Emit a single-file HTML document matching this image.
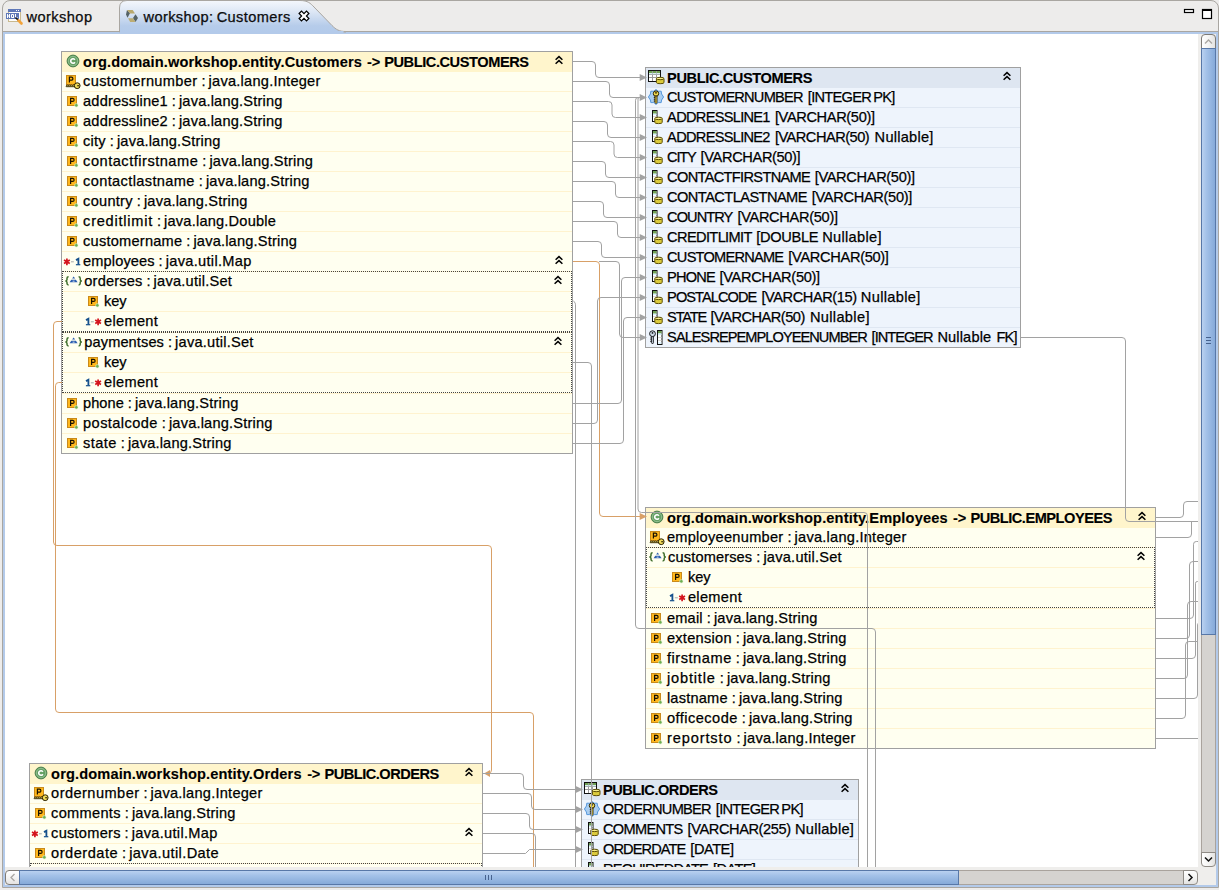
<!DOCTYPE html><html><head><meta charset="utf-8"><title>workshop: Customers</title><style>
html,body{margin:0;padding:0}
body{width:1219px;height:890px;overflow:hidden;background:#edeceb;position:relative;font-family:"Liberation Sans", sans-serif;font-size:14.6px;color:#000}
#ed{position:absolute;left:0;top:0;width:1198px;height:867px;overflow:hidden}
  .white{position:absolute;left:5px;top:34px;width:1193px;height:833px;background:#fff}
.bx{position:absolute;border:1px solid #a0a0a0;box-sizing:content-box}
.r{position:absolute}
.t{position:absolute;white-space:pre;height:20px;line-height:20px;-webkit-text-stroke:0.25px #000;word-spacing:-1.2px}
.b{font-weight:bold;-webkit-text-stroke:0.12px #000}
.i{position:absolute;overflow:visible}
.dot{position:absolute;border:1px dotted #444;box-sizing:content-box}
.ln{position:absolute;left:0;top:0}
.abs{position:absolute}
.tab{color:#111}
</style></head><body><div class="abs" style="left:2px;top:0;width:1217px;height:888px;border:1px solid #a9a6a1;border-radius:8px 8px 0 0;box-sizing:border-box;background:#edeceb"></div>
<svg class="abs" style="left:0;top:0" width="1219" height="34" viewBox="0 0 1219 34">
<defs><linearGradient id="tg" x1="0" y1="0" x2="0" y2="1"><stop offset="0" stop-color="#f4f7fc"/><stop offset="0.35" stop-color="#dde7f5"/><stop offset="0.8" stop-color="#b6ccea"/><stop offset="1" stop-color="#b3caea"/></linearGradient></defs>
<rect x="3" y="32" width="1215" height="2" fill="#b3caea"/>
<path d="M3 31.5H119.5" stroke="#a9a6a1" fill="none"/>
<path d="M344 31.5H1218" stroke="#a9a6a1" fill="none"/>
<path d="M119.500 32V8Q119.500 0.500 127 0.500H300C308 0.500 310.500 3.500 314 7L332 25.500C336 29.500 339 31.500 346 31.500V32Z" fill="url(#tg)" stroke="#a9a6a1"/>
<rect x="120" y="31" width="223.500" height="2" fill="#b3caea"/>
<!-- HQL icon -->
<g>
<rect x="8.500" y="9.500" width="12" height="12" fill="#fdfdfd" stroke="#c9b98f"/>
<rect x="8" y="9" width="13" height="3" fill="#5f78b8"/>
<rect x="16" y="10" width="1" height="1" fill="#fff"/><rect x="18" y="10" width="1" height="1" fill="#fff"/>
<rect x="6" y="13" width="13" height="6" fill="#5f78b8"/>
<path d="M7.500 14v4M7.500 16h2M9.500 14v4M11.500 14.500h2v3h-2zM13 17l1 1M15.500 14v3.500h2" stroke="#fff" fill="none" stroke-width="1"/>
<path d="M15.500 17.500l3.500 3.500" stroke="#111" stroke-width="1.600"/>
<path d="M18.500 20.500l3 3" stroke="#f2a33a" stroke-width="2.600" stroke-linecap="round"/>
</g>
<!-- diagram icon -->
<g>
<path d="M127 10L130 13.200L127.500 17.800L126 14.600Z" fill="#566366"/>
<path d="M127 10H132.700L135 13.500H130Z" fill="#b9a96e"/>
<path d="M135.500 14.300L138 18L135.500 22L133 18Z" fill="#566366"/>
<path d="M128.100 18.200H133L135.500 22H130.200Z" fill="#bdad72"/>
</g>
<!-- close X -->
<path transform="translate(304 16)" d="M-4.900 -2.500L-2.500 -4.900L0 -2.400L2.500 -4.900L4.900 -2.500L2.400 0L4.900 2.500L2.500 4.900L0 2.400L-2.500 4.900L-4.900 2.500L-2.400 0Z" fill="#fff" stroke="#000" stroke-width="1.200"/>
<!-- min/max -->
<rect x="1184.500" y="9.500" width="9" height="3" fill="#fff" stroke="#000" stroke-width="1.200"/>
<rect x="1202.500" y="9.500" width="9" height="9" fill="#fff" stroke="#000" stroke-width="1.200"/>
<rect x="1202" y="9" width="10" height="2" fill="#000"/>
</svg>
<div class="t tab" style="left:26.5px;top:7px;letter-spacing:0.441px">workshop</div>
<div class="t tab" style="left:143.500px;top:7px;letter-spacing:0.378px">workshop: Customers</div>
<div class="abs" style="left:3px;top:34px;width:2px;height:852px;background:#b3caea"></div>
<div class="abs" style="left:1216px;top:34px;width:2px;height:852px;background:#b3caea"></div>
<div class="abs" style="left:3px;top:885px;width:1215px;height:2px;background:#b3caea"></div>
<div class="abs" style="left:5px;top:34px;width:1211px;height:851px;background:#efeeec"></div>
<div id="ed"><div class="white"></div><div class="bx" style="left:61px;top:51px;width:510px;height:401px;background:#fffff0"></div><div class="r" style="left:62px;top:52px;width:510px;height:20px;background:#fff5cc"></div><svg class="i" style="left:64.5px;top:52.5px" width="16" height="16" viewBox="0 0 16 16"><circle cx="8" cy="8" r="5.9" fill="#64a064" stroke="#4a7f4c" stroke-width="1"/><circle cx="8" cy="8" r="4.7" fill="none" stroke="#9cc79a" stroke-width="0.8"/><path d="M9.9 6.7A2.3 2.3 0 1 0 9.9 9.3" fill="none" stroke="#fff" stroke-width="1.6"/></svg><div class="t b" style="left:83.1px;top:51.7px;letter-spacing:0.119px">org.domain.workshop.entity.Customers</div><div class="t b" style="left:367.0px;top:51.7px;letter-spacing:-0.195px">-&gt;</div><div class="t b" style="left:384.2px;top:51.7px;letter-spacing:-0.435px">PUBLIC.CUSTOMERS</div><svg class="i" style="left:554px;top:55.0px" width="10" height="10" viewBox="-5 -5 10 10"><path d="M-3.4 -0.2L0 -3.4L3.4 -0.2M-3.4 3.8L0 0.6L3.4 3.8" fill="none" stroke="#000" stroke-width="1.5"/></svg><div class="r" style="left:62px;top:72px;width:510px;height:20px;background:#fffff0;box-shadow:inset 0 -1px 0 #fff3cf"></div><svg class="i" style="left:66px;top:75px" width="16" height="15" viewBox="0 0 16 15"><rect x="0.5" y="0.5" width="9" height="9" fill="#ffb81c" stroke="#c98a1b"/><path d="M3.4 7.6V2.2H5.4A1.5 1.5 0 0 1 5.4 5.2H3.4" fill="none" stroke="#1a1200" stroke-width="1.2"/><path d="M0.2 11.2l1-1.5 1 1.1 1-1.1 1 1.1 1-1.1 1 1.1 1.2-.9h2v1.8H0.2z" fill="#f2dc5a" stroke="#2a2000" stroke-width="0.9"/><circle cx="11.2" cy="10.7" r="2.9" fill="#f2dc5a" stroke="#2a2000" stroke-width="1"/><rect x="11.2" y="10.2" width="2.2" height="1.1" fill="#2a2000"/></svg><div class="t" style="left:83.1px;top:70.8px;letter-spacing:0.350px">customernumber</div><div class="t" style="left:201.4px;top:70.8px;letter-spacing:-1.062px">:</div><div class="t" style="left:208.6px;top:70.8px;letter-spacing:0.240px">java.lang.Integer</div><div class="r" style="left:62px;top:92px;width:510px;height:20px;background:#fffff0;box-shadow:inset 0 -1px 0 #fff3cf"></div><svg class="i" style="left:67px;top:96px" width="13" height="13" viewBox="0 0 13 13"><rect x="0.5" y="0.5" width="9" height="9" fill="#ffb81c" stroke="#c98a1b"/><path d="M3.6 8V2.4H5.6A1.5 1.5 0 0 1 5.6 5.4H3.6" fill="none" stroke="#1a1200" stroke-width="1.2"/><circle cx="9.3" cy="9.3" r="1.7" fill="#6cae4f" stroke="#dff0d0" stroke-width="0.6"/></svg><div class="t" style="left:83.1px;top:90.8px;letter-spacing:0.161px">addressline1</div><div class="t" style="left:171.7px;top:90.8px;letter-spacing:-1.062px">:</div><div class="t" style="left:178.9px;top:90.8px;letter-spacing:0.193px">java.lang.String</div><div class="r" style="left:62px;top:112px;width:510px;height:20px;background:#fffff0;box-shadow:inset 0 -1px 0 #fff3cf"></div><svg class="i" style="left:67px;top:116px" width="13" height="13" viewBox="0 0 13 13"><rect x="0.5" y="0.5" width="9" height="9" fill="#ffb81c" stroke="#c98a1b"/><path d="M3.6 8V2.4H5.6A1.5 1.5 0 0 1 5.6 5.4H3.6" fill="none" stroke="#1a1200" stroke-width="1.2"/><circle cx="9.3" cy="9.3" r="1.7" fill="#6cae4f" stroke="#dff0d0" stroke-width="0.6"/></svg><div class="t" style="left:83.1px;top:110.8px;letter-spacing:0.161px">addressline2</div><div class="t" style="left:171.7px;top:110.8px;letter-spacing:-1.062px">:</div><div class="t" style="left:178.9px;top:110.8px;letter-spacing:0.193px">java.lang.String</div><div class="r" style="left:62px;top:132px;width:510px;height:20px;background:#fffff0;box-shadow:inset 0 -1px 0 #fff3cf"></div><svg class="i" style="left:67px;top:136px" width="13" height="13" viewBox="0 0 13 13"><rect x="0.5" y="0.5" width="9" height="9" fill="#ffb81c" stroke="#c98a1b"/><path d="M3.6 8V2.4H5.6A1.5 1.5 0 0 1 5.6 5.4H3.6" fill="none" stroke="#1a1200" stroke-width="1.2"/><circle cx="9.3" cy="9.3" r="1.7" fill="#6cae4f" stroke="#dff0d0" stroke-width="0.6"/></svg><div class="t" style="left:83.1px;top:130.8px;letter-spacing:0.202px">city</div><div class="t" style="left:109.7px;top:130.8px;letter-spacing:-1.062px">:</div><div class="t" style="left:116.9px;top:130.8px;letter-spacing:0.193px">java.lang.String</div><div class="r" style="left:62px;top:152px;width:510px;height:20px;background:#fffff0;box-shadow:inset 0 -1px 0 #fff3cf"></div><svg class="i" style="left:67px;top:156px" width="13" height="13" viewBox="0 0 13 13"><rect x="0.5" y="0.5" width="9" height="9" fill="#ffb81c" stroke="#c98a1b"/><path d="M3.6 8V2.4H5.6A1.5 1.5 0 0 1 5.6 5.4H3.6" fill="none" stroke="#1a1200" stroke-width="1.2"/><circle cx="9.3" cy="9.3" r="1.7" fill="#6cae4f" stroke="#dff0d0" stroke-width="0.6"/></svg><div class="t" style="left:83.1px;top:150.8px;letter-spacing:0.508px">contactfirstname</div><div class="t" style="left:202.2px;top:150.8px;letter-spacing:-1.062px">:</div><div class="t" style="left:209.4px;top:150.8px;letter-spacing:0.193px">java.lang.String</div><div class="r" style="left:62px;top:172px;width:510px;height:20px;background:#fffff0;box-shadow:inset 0 -1px 0 #fff3cf"></div><svg class="i" style="left:67px;top:176px" width="13" height="13" viewBox="0 0 13 13"><rect x="0.5" y="0.5" width="9" height="9" fill="#ffb81c" stroke="#c98a1b"/><path d="M3.6 8V2.4H5.6A1.5 1.5 0 0 1 5.6 5.4H3.6" fill="none" stroke="#1a1200" stroke-width="1.2"/><circle cx="9.3" cy="9.3" r="1.7" fill="#6cae4f" stroke="#dff0d0" stroke-width="0.6"/></svg><div class="t" style="left:83.1px;top:170.8px;letter-spacing:0.361px">contactlastname</div><div class="t" style="left:198.7px;top:170.8px;letter-spacing:-1.062px">:</div><div class="t" style="left:205.9px;top:170.8px;letter-spacing:0.193px">java.lang.String</div><div class="r" style="left:62px;top:192px;width:510px;height:20px;background:#fffff0;box-shadow:inset 0 -1px 0 #fff3cf"></div><svg class="i" style="left:67px;top:196px" width="13" height="13" viewBox="0 0 13 13"><rect x="0.5" y="0.5" width="9" height="9" fill="#ffb81c" stroke="#c98a1b"/><path d="M3.6 8V2.4H5.6A1.5 1.5 0 0 1 5.6 5.4H3.6" fill="none" stroke="#1a1200" stroke-width="1.2"/><circle cx="9.3" cy="9.3" r="1.7" fill="#6cae4f" stroke="#dff0d0" stroke-width="0.6"/></svg><div class="t" style="left:83.1px;top:190.8px;letter-spacing:0.263px">country</div><div class="t" style="left:136.7px;top:190.8px;letter-spacing:-1.062px">:</div><div class="t" style="left:143.9px;top:190.8px;letter-spacing:0.193px">java.lang.String</div><div class="r" style="left:62px;top:212px;width:510px;height:20px;background:#fffff0;box-shadow:inset 0 -1px 0 #fff3cf"></div><svg class="i" style="left:67px;top:216px" width="13" height="13" viewBox="0 0 13 13"><rect x="0.5" y="0.5" width="9" height="9" fill="#ffb81c" stroke="#c98a1b"/><path d="M3.6 8V2.4H5.6A1.5 1.5 0 0 1 5.6 5.4H3.6" fill="none" stroke="#1a1200" stroke-width="1.2"/><circle cx="9.3" cy="9.3" r="1.7" fill="#6cae4f" stroke="#dff0d0" stroke-width="0.6"/></svg><div class="t" style="left:83.1px;top:210.8px;letter-spacing:0.752px">creditlimit</div><div class="t" style="left:156.9px;top:210.8px;letter-spacing:-1.062px">:</div><div class="t" style="left:164.1px;top:210.8px;letter-spacing:0.204px">java.lang.Double</div><div class="r" style="left:62px;top:232px;width:510px;height:20px;background:#fffff0;box-shadow:inset 0 -1px 0 #fff3cf"></div><svg class="i" style="left:67px;top:236px" width="13" height="13" viewBox="0 0 13 13"><rect x="0.5" y="0.5" width="9" height="9" fill="#ffb81c" stroke="#c98a1b"/><path d="M3.6 8V2.4H5.6A1.5 1.5 0 0 1 5.6 5.4H3.6" fill="none" stroke="#1a1200" stroke-width="1.2"/><circle cx="9.3" cy="9.3" r="1.7" fill="#6cae4f" stroke="#dff0d0" stroke-width="0.6"/></svg><div class="t" style="left:83.1px;top:230.8px;letter-spacing:0.222px">customername</div><div class="t" style="left:186.2px;top:230.8px;letter-spacing:-1.062px">:</div><div class="t" style="left:193.4px;top:230.8px;letter-spacing:0.193px">java.lang.String</div><div class="r" style="left:62px;top:252px;width:510px;height:20px;background:#fffff0;box-shadow:inset 0 -1px 0 #fff3cf"></div><svg class="i" style="left:63px;top:255.5px" width="18" height="12" viewBox="0 -6 18 12"><path d="M3.9 -3.6V3.2M1 -1.9L6.8 1.5M1 1.5L6.8 -1.9" stroke="#d4141c" stroke-width="1.7" fill="none"/><rect x="8" y="-0.7" width="2.8" height="1" fill="#a8a8a8"/><path d="M13 -1.9L15.4 -3.3V2.6" stroke="#15508c" stroke-width="1.8" fill="none"/><rect x="12.9" y="2.1" width="4.4" height="1.2" fill="#15508c"/></svg><div class="t" style="left:83.1px;top:250.8px;letter-spacing:0.114px">employees</div><div class="t" style="left:158.6px;top:250.8px;letter-spacing:-1.062px">:</div><div class="t" style="left:165.8px;top:250.8px;letter-spacing:0.297px">java.util.Map</div><svg class="i" style="left:554px;top:255.0px" width="10" height="10" viewBox="-5 -5 10 10"><path d="M-3.4 -0.2L0 -3.4L3.4 -0.2M-3.4 3.8L0 0.6L3.4 3.8" fill="none" stroke="#000" stroke-width="1.5"/></svg><div class="r" style="left:62px;top:272px;width:510px;height:20px;background:#fffff0;box-shadow:inset 0 -1px 0 #fff3cf"></div><svg class="i" style="left:65.2px;top:274.5px" width="18" height="12" viewBox="0 -6 18 12"><path d="M3.6 -4.2Q2 -4.2 2 -2.8V-1.4Q2 -0.3 0.5 0Q2 0.3 2 1.4V2.6Q2 4 3.6 4" fill="none" stroke="#3f6e2c" stroke-width="1.5"/><path d="M13.6 -4.2Q15.2 -4.2 15.2 -2.8V-1.4Q15.2 -0.3 16.7 0Q15.2 0.3 15.2 1.4V2.6Q15.2 4 13.6 4" fill="none" stroke="#3f6e2c" stroke-width="1.5"/><path d="M8.6 -4.4L10.1 -2.4H7.1Z" fill="#2a5db0"/><path d="M6.3 -1.3H10.9L12.6 1.2H4.6Z" fill="#2a5db0"/><rect x="7.6" y="-0.3" width="2" height="0.9" fill="#dfe8f5"/></svg><div class="t" style="left:84.3px;top:270.8px;letter-spacing:0.177px">orderses</div><div class="t" style="left:146.4px;top:270.8px;letter-spacing:-1.062px">:</div><div class="t" style="left:153.6px;top:270.8px;letter-spacing:0.234px">java.util.Set</div><svg class="i" style="left:553px;top:275.0px" width="10" height="10" viewBox="-5 -5 10 10"><path d="M-3.4 -0.2L0 -3.4L3.4 -0.2M-3.4 3.8L0 0.6L3.4 3.8" fill="none" stroke="#000" stroke-width="1.5"/></svg><div class="r" style="left:62px;top:292px;width:510px;height:20px;background:#fffff0;box-shadow:inset 0 -1px 0 #fff3cf"></div><svg class="i" style="left:88px;top:296px" width="13" height="13" viewBox="0 0 13 13"><rect x="0.5" y="0.5" width="9" height="9" fill="#ffb81c" stroke="#c98a1b"/><path d="M3.6 8V2.4H5.6A1.5 1.5 0 0 1 5.6 5.4H3.6" fill="none" stroke="#1a1200" stroke-width="1.2"/><circle cx="9.3" cy="9.3" r="1.7" fill="#6cae4f" stroke="#dff0d0" stroke-width="0.6"/></svg><div class="t" style="left:104.1px;top:290.8px;letter-spacing:-0.073px">key</div><div class="r" style="left:62px;top:312px;width:510px;height:20px;background:#fffff0"></div><svg class="i" style="left:85.2px;top:315.5px" width="18" height="12" viewBox="0 -6 18 12"><path d="M1 -1.9L3.4 -3.3V2.6" stroke="#15508c" stroke-width="1.8" fill="none"/><rect x="0.9" y="2.1" width="4.4" height="1.2" fill="#15508c"/><rect x="5.8" y="-0.7" width="3" height="1" fill="#a8a8a8"/><path d="M13.1 -3.6V3.2M10.2 -1.9L16 1.5M10.2 1.5L16 -1.9" stroke="#d4141c" stroke-width="1.7" fill="none"/></svg><div class="t" style="left:104.1px;top:310.8px;letter-spacing:0.297px">element</div><div class="dot" style="left:62px;top:271px;width:508px;height:59px"></div><div class="r" style="left:62px;top:332px;width:510px;height:1px;background:#fff3cf"></div><div class="r" style="left:62px;top:333px;width:510px;height:20px;background:#fffff0;box-shadow:inset 0 -1px 0 #fff3cf"></div><svg class="i" style="left:65.2px;top:335.5px" width="18" height="12" viewBox="0 -6 18 12"><path d="M3.6 -4.2Q2 -4.2 2 -2.8V-1.4Q2 -0.3 0.5 0Q2 0.3 2 1.4V2.6Q2 4 3.6 4" fill="none" stroke="#3f6e2c" stroke-width="1.5"/><path d="M13.6 -4.2Q15.2 -4.2 15.2 -2.8V-1.4Q15.2 -0.3 16.7 0Q15.2 0.3 15.2 1.4V2.6Q15.2 4 13.6 4" fill="none" stroke="#3f6e2c" stroke-width="1.5"/><path d="M8.6 -4.4L10.1 -2.4H7.1Z" fill="#2a5db0"/><path d="M6.3 -1.3H10.9L12.6 1.2H4.6Z" fill="#2a5db0"/><rect x="7.6" y="-0.3" width="2" height="0.9" fill="#dfe8f5"/></svg><div class="t" style="left:84.3px;top:331.8px;letter-spacing:0.101px">paymentses</div><div class="t" style="left:167.9px;top:331.8px;letter-spacing:-1.062px">:</div><div class="t" style="left:175.1px;top:331.8px;letter-spacing:0.234px">java.util.Set</div><svg class="i" style="left:553px;top:336.0px" width="10" height="10" viewBox="-5 -5 10 10"><path d="M-3.4 -0.2L0 -3.4L3.4 -0.2M-3.4 3.8L0 0.6L3.4 3.8" fill="none" stroke="#000" stroke-width="1.5"/></svg><div class="r" style="left:62px;top:353px;width:510px;height:20px;background:#fffff0;box-shadow:inset 0 -1px 0 #fff3cf"></div><svg class="i" style="left:88px;top:357px" width="13" height="13" viewBox="0 0 13 13"><rect x="0.5" y="0.5" width="9" height="9" fill="#ffb81c" stroke="#c98a1b"/><path d="M3.6 8V2.4H5.6A1.5 1.5 0 0 1 5.6 5.4H3.6" fill="none" stroke="#1a1200" stroke-width="1.2"/><circle cx="9.3" cy="9.3" r="1.7" fill="#6cae4f" stroke="#dff0d0" stroke-width="0.6"/></svg><div class="t" style="left:104.1px;top:351.8px;letter-spacing:-0.073px">key</div><div class="r" style="left:62px;top:373px;width:510px;height:20px;background:#fffff0"></div><svg class="i" style="left:85.2px;top:376.5px" width="18" height="12" viewBox="0 -6 18 12"><path d="M1 -1.9L3.4 -3.3V2.6" stroke="#15508c" stroke-width="1.8" fill="none"/><rect x="0.9" y="2.1" width="4.4" height="1.2" fill="#15508c"/><rect x="5.8" y="-0.7" width="3" height="1" fill="#a8a8a8"/><path d="M13.1 -3.6V3.2M10.2 -1.9L16 1.5M10.2 1.5L16 -1.9" stroke="#d4141c" stroke-width="1.7" fill="none"/></svg><div class="t" style="left:104.1px;top:371.8px;letter-spacing:0.297px">element</div><div class="dot" style="left:62px;top:332px;width:508px;height:59px"></div><div class="r" style="left:62px;top:393px;width:510px;height:1px;background:#fff3cf"></div><div class="r" style="left:62px;top:394px;width:510px;height:20px;background:#fffff0;box-shadow:inset 0 -1px 0 #fff3cf"></div><svg class="i" style="left:67px;top:398px" width="13" height="13" viewBox="0 0 13 13"><rect x="0.5" y="0.5" width="9" height="9" fill="#ffb81c" stroke="#c98a1b"/><path d="M3.6 8V2.4H5.6A1.5 1.5 0 0 1 5.6 5.4H3.6" fill="none" stroke="#1a1200" stroke-width="1.2"/><circle cx="9.3" cy="9.3" r="1.7" fill="#6cae4f" stroke="#dff0d0" stroke-width="0.6"/></svg><div class="t" style="left:83.1px;top:392.8px;letter-spacing:0.021px">phone</div><div class="t" style="left:127.7px;top:392.8px;letter-spacing:-1.062px">:</div><div class="t" style="left:134.9px;top:392.8px;letter-spacing:0.193px">java.lang.String</div><div class="r" style="left:62px;top:414px;width:510px;height:20px;background:#fffff0;box-shadow:inset 0 -1px 0 #fff3cf"></div><svg class="i" style="left:67px;top:418px" width="13" height="13" viewBox="0 0 13 13"><rect x="0.5" y="0.5" width="9" height="9" fill="#ffb81c" stroke="#c98a1b"/><path d="M3.6 8V2.4H5.6A1.5 1.5 0 0 1 5.6 5.4H3.6" fill="none" stroke="#1a1200" stroke-width="1.2"/><circle cx="9.3" cy="9.3" r="1.7" fill="#6cae4f" stroke="#dff0d0" stroke-width="0.6"/></svg><div class="t" style="left:83.1px;top:412.8px;letter-spacing:0.411px">postalcode</div><div class="t" style="left:161.7px;top:412.8px;letter-spacing:-1.062px">:</div><div class="t" style="left:168.9px;top:412.8px;letter-spacing:0.193px">java.lang.String</div><div class="r" style="left:62px;top:434px;width:510px;height:20px;background:#fffff0;box-shadow:inset 0 -1px 0 #fff3cf"></div><svg class="i" style="left:67px;top:438px" width="13" height="13" viewBox="0 0 13 13"><rect x="0.5" y="0.5" width="9" height="9" fill="#ffb81c" stroke="#c98a1b"/><path d="M3.6 8V2.4H5.6A1.5 1.5 0 0 1 5.6 5.4H3.6" fill="none" stroke="#1a1200" stroke-width="1.2"/><circle cx="9.3" cy="9.3" r="1.7" fill="#6cae4f" stroke="#dff0d0" stroke-width="0.6"/></svg><div class="t" style="left:83.1px;top:432.8px;letter-spacing:0.412px">state</div><div class="t" style="left:120.7px;top:432.8px;letter-spacing:-1.062px">:</div><div class="t" style="left:127.9px;top:432.8px;letter-spacing:0.193px">java.lang.String</div><div class="abs" style="left:61px;top:453px;width:512px;height:1px;background:#a0a0a0"></div><div class="bx" style="left:645px;top:507px;width:509px;height:240px;background:#fffff0"></div><div class="r" style="left:646px;top:508px;width:509px;height:20px;background:#fff5cc"></div><svg class="i" style="left:648.5px;top:508.5px" width="16" height="16" viewBox="0 0 16 16"><circle cx="8" cy="8" r="5.9" fill="#64a064" stroke="#4a7f4c" stroke-width="1"/><circle cx="8" cy="8" r="4.7" fill="none" stroke="#9cc79a" stroke-width="0.8"/><path d="M9.9 6.7A2.3 2.3 0 1 0 9.9 9.3" fill="none" stroke="#fff" stroke-width="1.6"/></svg><div class="t b" style="left:666.9px;top:507.7px;letter-spacing:0.149px">org.domain.workshop.entity.Employees</div><div class="t b" style="left:953.1px;top:507.7px;letter-spacing:-0.295px">-&gt;</div><div class="t b" style="left:970.4px;top:507.7px;letter-spacing:-0.481px">PUBLIC.EMPLOYEES</div><svg class="i" style="left:1137px;top:511.0px" width="10" height="10" viewBox="-5 -5 10 10"><path d="M-3.4 -0.2L0 -3.4L3.4 -0.2M-3.4 3.8L0 0.6L3.4 3.8" fill="none" stroke="#000" stroke-width="1.5"/></svg><div class="r" style="left:646px;top:528px;width:509px;height:20px;background:#fffff0;box-shadow:inset 0 -1px 0 #fff3cf"></div><svg class="i" style="left:650px;top:531px" width="16" height="15" viewBox="0 0 16 15"><rect x="0.5" y="0.5" width="9" height="9" fill="#ffb81c" stroke="#c98a1b"/><path d="M3.4 7.6V2.2H5.4A1.5 1.5 0 0 1 5.4 5.2H3.4" fill="none" stroke="#1a1200" stroke-width="1.2"/><path d="M0.2 11.2l1-1.5 1 1.1 1-1.1 1 1.1 1-1.1 1 1.1 1.2-.9h2v1.8H0.2z" fill="#f2dc5a" stroke="#2a2000" stroke-width="0.9"/><circle cx="11.2" cy="10.7" r="2.9" fill="#f2dc5a" stroke="#2a2000" stroke-width="1"/><rect x="11.2" y="10.2" width="2.2" height="1.1" fill="#2a2000"/></svg><div class="t" style="left:666.9px;top:526.8px;letter-spacing:0.274px">employeenumber</div><div class="t" style="left:787.4px;top:526.8px;letter-spacing:-1.062px">:</div><div class="t" style="left:794.6px;top:526.8px;letter-spacing:0.240px">java.lang.Integer</div><div class="r" style="left:646px;top:548px;width:509px;height:20px;background:#fffff0;box-shadow:inset 0 -1px 0 #fff3cf"></div><svg class="i" style="left:649.2px;top:550.5px" width="18" height="12" viewBox="0 -6 18 12"><path d="M3.6 -4.2Q2 -4.2 2 -2.8V-1.4Q2 -0.3 0.5 0Q2 0.3 2 1.4V2.6Q2 4 3.6 4" fill="none" stroke="#3f6e2c" stroke-width="1.5"/><path d="M13.6 -4.2Q15.2 -4.2 15.2 -2.8V-1.4Q15.2 -0.3 16.7 0Q15.2 0.3 15.2 1.4V2.6Q15.2 4 13.6 4" fill="none" stroke="#3f6e2c" stroke-width="1.5"/><path d="M8.6 -4.4L10.1 -2.4H7.1Z" fill="#2a5db0"/><path d="M6.3 -1.3H10.9L12.6 1.2H4.6Z" fill="#2a5db0"/><rect x="7.6" y="-0.3" width="2" height="0.9" fill="#dfe8f5"/></svg><div class="t" style="left:668.1px;top:546.8px;letter-spacing:0.133px">customerses</div><div class="t" style="left:756.2px;top:546.8px;letter-spacing:-1.062px">:</div><div class="t" style="left:763.4px;top:546.8px;letter-spacing:0.234px">java.util.Set</div><svg class="i" style="left:1136px;top:551.0px" width="10" height="10" viewBox="-5 -5 10 10"><path d="M-3.4 -0.2L0 -3.4L3.4 -0.2M-3.4 3.8L0 0.6L3.4 3.8" fill="none" stroke="#000" stroke-width="1.5"/></svg><div class="r" style="left:646px;top:568px;width:509px;height:20px;background:#fffff0;box-shadow:inset 0 -1px 0 #fff3cf"></div><svg class="i" style="left:672px;top:572px" width="13" height="13" viewBox="0 0 13 13"><rect x="0.5" y="0.5" width="9" height="9" fill="#ffb81c" stroke="#c98a1b"/><path d="M3.6 8V2.4H5.6A1.5 1.5 0 0 1 5.6 5.4H3.6" fill="none" stroke="#1a1200" stroke-width="1.2"/><circle cx="9.3" cy="9.3" r="1.7" fill="#6cae4f" stroke="#dff0d0" stroke-width="0.6"/></svg><div class="t" style="left:687.9px;top:566.8px;letter-spacing:-0.006px">key</div><div class="r" style="left:646px;top:588px;width:509px;height:20px;background:#fffff0"></div><svg class="i" style="left:669.2px;top:591.5px" width="18" height="12" viewBox="0 -6 18 12"><path d="M1 -1.9L3.4 -3.3V2.6" stroke="#15508c" stroke-width="1.8" fill="none"/><rect x="0.9" y="2.1" width="4.4" height="1.2" fill="#15508c"/><rect x="5.8" y="-0.7" width="3" height="1" fill="#a8a8a8"/><path d="M13.1 -3.6V3.2M10.2 -1.9L16 1.5M10.2 1.5L16 -1.9" stroke="#d4141c" stroke-width="1.7" fill="none"/></svg><div class="t" style="left:687.9px;top:586.8px;letter-spacing:0.325px">element</div><div class="dot" style="left:646px;top:547px;width:507px;height:59px"></div><div class="r" style="left:646px;top:608px;width:509px;height:1px;background:#fff3cf"></div><div class="r" style="left:646px;top:609px;width:509px;height:20px;background:#fffff0;box-shadow:inset 0 -1px 0 #fff3cf"></div><svg class="i" style="left:651px;top:613px" width="13" height="13" viewBox="0 0 13 13"><rect x="0.5" y="0.5" width="9" height="9" fill="#ffb81c" stroke="#c98a1b"/><path d="M3.6 8V2.4H5.6A1.5 1.5 0 0 1 5.6 5.4H3.6" fill="none" stroke="#1a1200" stroke-width="1.2"/><circle cx="9.3" cy="9.3" r="1.7" fill="#6cae4f" stroke="#dff0d0" stroke-width="0.6"/></svg><div class="t" style="left:666.9px;top:607.8px;letter-spacing:0.205px">email</div><div class="t" style="left:706.7px;top:607.8px;letter-spacing:-1.062px">:</div><div class="t" style="left:713.9px;top:607.8px;letter-spacing:0.193px">java.lang.String</div><div class="r" style="left:646px;top:629px;width:509px;height:20px;background:#fffff0;box-shadow:inset 0 -1px 0 #fff3cf"></div><svg class="i" style="left:651px;top:633px" width="13" height="13" viewBox="0 0 13 13"><rect x="0.5" y="0.5" width="9" height="9" fill="#ffb81c" stroke="#c98a1b"/><path d="M3.6 8V2.4H5.6A1.5 1.5 0 0 1 5.6 5.4H3.6" fill="none" stroke="#1a1200" stroke-width="1.2"/><circle cx="9.3" cy="9.3" r="1.7" fill="#6cae4f" stroke="#dff0d0" stroke-width="0.6"/></svg><div class="t" style="left:666.9px;top:627.8px;letter-spacing:0.268px">extension</div><div class="t" style="left:735.7px;top:627.8px;letter-spacing:-1.062px">:</div><div class="t" style="left:742.9px;top:627.8px;letter-spacing:0.193px">java.lang.String</div><div class="r" style="left:646px;top:649px;width:509px;height:20px;background:#fffff0;box-shadow:inset 0 -1px 0 #fff3cf"></div><svg class="i" style="left:651px;top:653px" width="13" height="13" viewBox="0 0 13 13"><rect x="0.5" y="0.5" width="9" height="9" fill="#ffb81c" stroke="#c98a1b"/><path d="M3.6 8V2.4H5.6A1.5 1.5 0 0 1 5.6 5.4H3.6" fill="none" stroke="#1a1200" stroke-width="1.2"/><circle cx="9.3" cy="9.3" r="1.7" fill="#6cae4f" stroke="#dff0d0" stroke-width="0.6"/></svg><div class="t" style="left:666.9px;top:647.8px;letter-spacing:0.543px">firstname</div><div class="t" style="left:735.7px;top:647.8px;letter-spacing:-1.062px">:</div><div class="t" style="left:742.9px;top:647.8px;letter-spacing:0.193px">java.lang.String</div><div class="r" style="left:646px;top:669px;width:509px;height:20px;background:#fffff0;box-shadow:inset 0 -1px 0 #fff3cf"></div><svg class="i" style="left:651px;top:673px" width="13" height="13" viewBox="0 0 13 13"><rect x="0.5" y="0.5" width="9" height="9" fill="#ffb81c" stroke="#c98a1b"/><path d="M3.6 8V2.4H5.6A1.5 1.5 0 0 1 5.6 5.4H3.6" fill="none" stroke="#1a1200" stroke-width="1.2"/><circle cx="9.3" cy="9.3" r="1.7" fill="#6cae4f" stroke="#dff0d0" stroke-width="0.6"/></svg><div class="t" style="left:666.9px;top:667.8px;letter-spacing:0.839px">jobtitle</div><div class="t" style="left:719.7px;top:667.8px;letter-spacing:-1.062px">:</div><div class="t" style="left:726.9px;top:667.8px;letter-spacing:0.193px">java.lang.String</div><div class="r" style="left:646px;top:689px;width:509px;height:20px;background:#fffff0;box-shadow:inset 0 -1px 0 #fff3cf"></div><svg class="i" style="left:651px;top:693px" width="13" height="13" viewBox="0 0 13 13"><rect x="0.5" y="0.5" width="9" height="9" fill="#ffb81c" stroke="#c98a1b"/><path d="M3.6 8V2.4H5.6A1.5 1.5 0 0 1 5.6 5.4H3.6" fill="none" stroke="#1a1200" stroke-width="1.2"/><circle cx="9.3" cy="9.3" r="1.7" fill="#6cae4f" stroke="#dff0d0" stroke-width="0.6"/></svg><div class="t" style="left:666.9px;top:687.8px;letter-spacing:0.210px">lastname</div><div class="t" style="left:731.7px;top:687.8px;letter-spacing:-1.062px">:</div><div class="t" style="left:738.9px;top:687.8px;letter-spacing:0.193px">java.lang.String</div><div class="r" style="left:646px;top:709px;width:509px;height:20px;background:#fffff0;box-shadow:inset 0 -1px 0 #fff3cf"></div><svg class="i" style="left:651px;top:713px" width="13" height="13" viewBox="0 0 13 13"><rect x="0.5" y="0.5" width="9" height="9" fill="#ffb81c" stroke="#c98a1b"/><path d="M3.6 8V2.4H5.6A1.5 1.5 0 0 1 5.6 5.4H3.6" fill="none" stroke="#1a1200" stroke-width="1.2"/><circle cx="9.3" cy="9.3" r="1.7" fill="#6cae4f" stroke="#dff0d0" stroke-width="0.6"/></svg><div class="t" style="left:666.9px;top:707.8px;letter-spacing:0.463px">officecode</div><div class="t" style="left:741.7px;top:707.8px;letter-spacing:-1.062px">:</div><div class="t" style="left:748.9px;top:707.8px;letter-spacing:0.193px">java.lang.String</div><div class="r" style="left:646px;top:729px;width:509px;height:20px;background:#fffff0;box-shadow:inset 0 -1px 0 #fff3cf"></div><svg class="i" style="left:651px;top:733px" width="13" height="13" viewBox="0 0 13 13"><rect x="0.5" y="0.5" width="9" height="9" fill="#ffb81c" stroke="#c98a1b"/><path d="M3.6 8V2.4H5.6A1.5 1.5 0 0 1 5.6 5.4H3.6" fill="none" stroke="#1a1200" stroke-width="1.2"/><circle cx="9.3" cy="9.3" r="1.7" fill="#6cae4f" stroke="#dff0d0" stroke-width="0.6"/></svg><div class="t" style="left:666.9px;top:727.8px;letter-spacing:0.890px">reportsto</div><div class="t" style="left:736.4px;top:727.8px;letter-spacing:-1.062px">:</div><div class="t" style="left:743.6px;top:727.8px;letter-spacing:0.240px">java.lang.Integer</div><div class="abs" style="left:645px;top:748px;width:511px;height:1px;background:#a0a0a0"></div><div class="bx" style="left:29px;top:763px;width:452px;height:160px;background:#fffff0"></div><div class="r" style="left:30px;top:764px;width:452px;height:20px;background:#fff5cc"></div><svg class="i" style="left:32.5px;top:764.5px" width="16" height="16" viewBox="0 0 16 16"><circle cx="8" cy="8" r="5.9" fill="#64a064" stroke="#4a7f4c" stroke-width="1"/><circle cx="8" cy="8" r="4.7" fill="none" stroke="#9cc79a" stroke-width="0.8"/><path d="M9.9 6.7A2.3 2.3 0 1 0 9.9 9.3" fill="none" stroke="#fff" stroke-width="1.6"/></svg><div class="t b" style="left:51.1px;top:763.7px;letter-spacing:0.132px">org.domain.workshop.entity.Orders</div><div class="t b" style="left:307.2px;top:763.7px;letter-spacing:-0.195px">-&gt;</div><div class="t b" style="left:324.4px;top:763.7px;letter-spacing:-0.493px">PUBLIC.ORDERS</div><svg class="i" style="left:464px;top:767.0px" width="10" height="10" viewBox="-5 -5 10 10"><path d="M-3.4 -0.2L0 -3.4L3.4 -0.2M-3.4 3.8L0 0.6L3.4 3.8" fill="none" stroke="#000" stroke-width="1.5"/></svg><div class="r" style="left:30px;top:784px;width:452px;height:20px;background:#fffff0;box-shadow:inset 0 -1px 0 #fff3cf"></div><svg class="i" style="left:34px;top:787px" width="16" height="15" viewBox="0 0 16 15"><rect x="0.5" y="0.5" width="9" height="9" fill="#ffb81c" stroke="#c98a1b"/><path d="M3.4 7.6V2.2H5.4A1.5 1.5 0 0 1 5.4 5.2H3.4" fill="none" stroke="#1a1200" stroke-width="1.2"/><path d="M0.2 11.2l1-1.5 1 1.1 1-1.1 1 1.1 1-1.1 1 1.1 1.2-.9h2v1.8H0.2z" fill="#f2dc5a" stroke="#2a2000" stroke-width="0.9"/><circle cx="11.2" cy="10.7" r="2.9" fill="#f2dc5a" stroke="#2a2000" stroke-width="1"/><rect x="11.2" y="10.2" width="2.2" height="1.1" fill="#2a2000"/></svg><div class="t" style="left:51.1px;top:782.8px;letter-spacing:0.440px">ordernumber</div><div class="t" style="left:143.4px;top:782.8px;letter-spacing:-1.062px">:</div><div class="t" style="left:150.6px;top:782.8px;letter-spacing:0.240px">java.lang.Integer</div><div class="r" style="left:30px;top:804px;width:452px;height:20px;background:#fffff0;box-shadow:inset 0 -1px 0 #fff3cf"></div><svg class="i" style="left:35px;top:808px" width="13" height="13" viewBox="0 0 13 13"><rect x="0.5" y="0.5" width="9" height="9" fill="#ffb81c" stroke="#c98a1b"/><path d="M3.6 8V2.4H5.6A1.5 1.5 0 0 1 5.6 5.4H3.6" fill="none" stroke="#1a1200" stroke-width="1.2"/><circle cx="9.3" cy="9.3" r="1.7" fill="#6cae4f" stroke="#dff0d0" stroke-width="0.6"/></svg><div class="t" style="left:51.1px;top:802.8px;letter-spacing:0.298px">comments</div><div class="t" style="left:124.7px;top:802.8px;letter-spacing:-1.062px">:</div><div class="t" style="left:131.9px;top:802.8px;letter-spacing:0.193px">java.lang.String</div><div class="r" style="left:30px;top:824px;width:452px;height:20px;background:#fffff0;box-shadow:inset 0 -1px 0 #fff3cf"></div><svg class="i" style="left:31px;top:827.5px" width="18" height="12" viewBox="0 -6 18 12"><path d="M3.9 -3.6V3.2M1 -1.9L6.8 1.5M1 1.5L6.8 -1.9" stroke="#d4141c" stroke-width="1.7" fill="none"/><rect x="8" y="-0.7" width="2.8" height="1" fill="#a8a8a8"/><path d="M13 -1.9L15.4 -3.3V2.6" stroke="#15508c" stroke-width="1.8" fill="none"/><rect x="12.9" y="2.1" width="4.4" height="1.2" fill="#15508c"/></svg><div class="t" style="left:51.1px;top:822.8px;letter-spacing:0.254px">customers</div><div class="t" style="left:124.6px;top:822.8px;letter-spacing:-1.062px">:</div><div class="t" style="left:131.8px;top:822.8px;letter-spacing:0.297px">java.util.Map</div><svg class="i" style="left:464px;top:827.0px" width="10" height="10" viewBox="-5 -5 10 10"><path d="M-3.4 -0.2L0 -3.4L3.4 -0.2M-3.4 3.8L0 0.6L3.4 3.8" fill="none" stroke="#000" stroke-width="1.5"/></svg><div class="r" style="left:30px;top:844px;width:452px;height:20px;background:#fffff0;box-shadow:inset 0 -1px 0 #fff3cf"></div><svg class="i" style="left:35px;top:848px" width="13" height="13" viewBox="0 0 13 13"><rect x="0.5" y="0.5" width="9" height="9" fill="#ffb81c" stroke="#c98a1b"/><path d="M3.6 8V2.4H5.6A1.5 1.5 0 0 1 5.6 5.4H3.6" fill="none" stroke="#1a1200" stroke-width="1.2"/><circle cx="9.3" cy="9.3" r="1.7" fill="#6cae4f" stroke="#dff0d0" stroke-width="0.6"/></svg><div class="t" style="left:51.1px;top:842.8px;letter-spacing:0.502px">orderdate</div><div class="t" style="left:122.0px;top:842.8px;letter-spacing:-1.062px">:</div><div class="t" style="left:129.2px;top:842.8px;letter-spacing:0.395px">java.util.Date</div><div class="r" style="left:30px;top:864px;width:452px;height:20px;background:#fffff0;box-shadow:inset 0 -1px 0 #fff3cf"></div><svg class="i" style="left:33.2px;top:866.5px" width="18" height="12" viewBox="0 -6 18 12"><path d="M3.6 -4.2Q2 -4.2 2 -2.8V-1.4Q2 -0.3 0.5 0Q2 0.3 2 1.4V2.6Q2 4 3.6 4" fill="none" stroke="#3f6e2c" stroke-width="1.5"/><path d="M13.6 -4.2Q15.2 -4.2 15.2 -2.8V-1.4Q15.2 -0.3 16.7 0Q15.2 0.3 15.2 1.4V2.6Q15.2 4 13.6 4" fill="none" stroke="#3f6e2c" stroke-width="1.5"/><path d="M8.6 -4.4L10.1 -2.4H7.1Z" fill="#2a5db0"/><path d="M6.3 -1.3H10.9L12.6 1.2H4.6Z" fill="#2a5db0"/><rect x="7.6" y="-0.3" width="2" height="0.9" fill="#dfe8f5"/></svg><div class="t" style="left:52.3px;top:862.8px;letter-spacing:1.145px">orderdetailses</div><div class="t" style="left:163.9px;top:862.8px;letter-spacing:-1.062px">:</div><div class="t" style="left:171.1px;top:862.8px;letter-spacing:0.234px">java.util.Set</div><svg class="i" style="left:463px;top:867.0px" width="10" height="10" viewBox="-5 -5 10 10"><path d="M-3.4 -0.2L0 -3.4L3.4 -0.2M-3.4 3.8L0 0.6L3.4 3.8" fill="none" stroke="#000" stroke-width="1.5"/></svg><div class="r" style="left:30px;top:884px;width:452px;height:20px;background:#fffff0;box-shadow:inset 0 -1px 0 #fff3cf"></div><svg class="i" style="left:56px;top:888px" width="13" height="13" viewBox="0 0 13 13"><rect x="0.5" y="0.5" width="9" height="9" fill="#ffb81c" stroke="#c98a1b"/><path d="M3.6 8V2.4H5.6A1.5 1.5 0 0 1 5.6 5.4H3.6" fill="none" stroke="#1a1200" stroke-width="1.2"/><circle cx="9.3" cy="9.3" r="1.7" fill="#6cae4f" stroke="#dff0d0" stroke-width="0.6"/></svg><div class="t" style="left:72.1px;top:882.8px;letter-spacing:-0.073px">key</div><div class="r" style="left:30px;top:904px;width:452px;height:20px;background:#fffff0"></div><svg class="i" style="left:53.2px;top:907.5px" width="18" height="12" viewBox="0 -6 18 12"><path d="M1 -1.9L3.4 -3.3V2.6" stroke="#15508c" stroke-width="1.8" fill="none"/><rect x="0.9" y="2.1" width="4.4" height="1.2" fill="#15508c"/><rect x="5.8" y="-0.7" width="3" height="1" fill="#a8a8a8"/><path d="M13.1 -3.6V3.2M10.2 -1.9L16 1.5M10.2 1.5L16 -1.9" stroke="#d4141c" stroke-width="1.7" fill="none"/></svg><div class="t" style="left:72.1px;top:902.8px;letter-spacing:0.297px">element</div><div class="dot" style="left:30px;top:863px;width:450px;height:59px"></div><div class="r" style="left:30px;top:924px;width:452px;height:1px;background:#fff3cf"></div><div class="abs" style="left:29px;top:924px;width:454px;height:1px;background:#a0a0a0"></div><div class="bx" style="left:645px;top:67px;width:374px;height:279px;background:#eef4fc"></div><div class="r" style="left:646px;top:68px;width:374px;height:20px;background:#dee6f1"></div><svg class="i" style="left:648px;top:70px" width="17" height="15" viewBox="0 0 17 15"><rect x="0.5" y="0.5" width="12" height="11" fill="#fff" stroke="#111"/><rect x="1" y="1" width="11" height="2.2" fill="#6fa053"/><path d="M4.5 1v10M8.5 1v10M1 4.5h11M1 7.5h11" stroke="#9a9a9a" stroke-width="1" fill="none"/><rect x="1" y="3.3" width="11" height="1" fill="#cfeffc" opacity="0.8"/><path d="M8.4 8.5v4.1a3.8 1.1 0 0 0 7.6 0V8.5Z" fill="#dccb3c" stroke="#5b4d05" stroke-width="1"/><ellipse cx="12.2" cy="8.5" rx="3.8" ry="1.2" fill="#f7ee8a" stroke="#5b4d05" stroke-width="1"/></svg><div class="t b" style="left:667.1px;top:67.7px;letter-spacing:-0.397px">PUBLIC.CUSTOMERS</div><svg class="i" style="left:1002px;top:71.0px" width="10" height="10" viewBox="-5 -5 10 10"><path d="M-3.4 -0.2L0 -3.4L3.4 -0.2M-3.4 3.8L0 0.6L3.4 3.8" fill="none" stroke="#000" stroke-width="1.5"/></svg><div class="r" style="left:646px;top:88px;width:374px;height:20px;background:#eef4fc;box-shadow:inset 0 -1px 0 #dfe7f2"></div><svg class="i" style="left:648px;top:89px" width="16" height="16" viewBox="0 0 16 16"><path d="M8 0.5L10.2 2.2H13.2L13.6 5L15.6 8L13.6 11L13.2 13.6H10.2L8 15.5L5.8 13.6H2.8L2.4 11L0.4 8L2.4 5L2.8 2.2H5.8Z" fill="#a9cdf0" stroke="#4a90d9" stroke-width="0.9"/><circle cx="8" cy="4.6" r="2.7" fill="#f4dc4e" stroke="#2a2000" stroke-width="1"/><circle cx="8" cy="3.8" r="0.9" fill="#2a2000"/><path d="M7 7v6.4l1 1.2 1-1.2V7Z" fill="#f4dc4e" stroke="#2a2000" stroke-width="0.9"/><path d="M5.8 8.5h1.4M5.8 10.3h1.4M5.8 12.1h1.4" stroke="#2a2000" stroke-width="0.9"/></svg><div class="t" style="left:667.1px;top:86.8px;letter-spacing:-0.779px">CUSTOMERNUMBER</div><div class="t" style="left:807.8px;top:86.8px;letter-spacing:-0.708px">[INTEGER PK]</div><div class="r" style="left:646px;top:108px;width:374px;height:20px;background:#eef4fc;box-shadow:inset 0 -1px 0 #dfe7f2"></div><svg class="i" style="left:652px;top:110px" width="12" height="15" viewBox="0 0 12 15"><rect x="0.5" y="0.5" width="4.5" height="11" fill="#fff" stroke="#111"/><rect x="1" y="1" width="3.5" height="2.6" fill="#6fa053"/><rect x="1" y="3.8" width="3.5" height="1.2" fill="#cfeffc"/><rect x="1" y="6" width="3.5" height="1" fill="#d8d8d8"/><path d="M2.8 8.4v4.1a3.7 1.1 0 0 0 7.4 0V8.4Z" fill="#dccb3c" stroke="#5b4d05" stroke-width="1"/><ellipse cx="6.5" cy="8.4" rx="3.7" ry="1.2" fill="#f7ee8a" stroke="#5b4d05" stroke-width="1"/></svg><div class="t" style="left:667.1px;top:106.8px;letter-spacing:-0.702px">ADDRESSLINE1</div><div class="t" style="left:774.9px;top:106.8px;letter-spacing:-0.357px">[VARCHAR(50)]</div><div class="r" style="left:646px;top:128px;width:374px;height:20px;background:#eef4fc;box-shadow:inset 0 -1px 0 #dfe7f2"></div><svg class="i" style="left:652px;top:130px" width="12" height="15" viewBox="0 0 12 15"><rect x="0.5" y="0.5" width="4.5" height="11" fill="#fff" stroke="#111"/><rect x="1" y="1" width="3.5" height="2.6" fill="#6fa053"/><rect x="1" y="3.8" width="3.5" height="1.2" fill="#cfeffc"/><rect x="1" y="6" width="3.5" height="1" fill="#d8d8d8"/><path d="M2.8 8.4v4.1a3.7 1.1 0 0 0 7.4 0V8.4Z" fill="#dccb3c" stroke="#5b4d05" stroke-width="1"/><ellipse cx="6.5" cy="8.4" rx="3.7" ry="1.2" fill="#f7ee8a" stroke="#5b4d05" stroke-width="1"/></svg><div class="t" style="left:667.1px;top:126.8px;letter-spacing:-0.702px">ADDRESSLINE2</div><div class="t" style="left:774.9px;top:126.8px;letter-spacing:-0.500px">[VARCHAR(50)</div><div class="t" style="left:874.6px;top:126.8px;letter-spacing:0.245px">Nullable]</div><div class="r" style="left:646px;top:148px;width:374px;height:20px;background:#eef4fc;box-shadow:inset 0 -1px 0 #dfe7f2"></div><svg class="i" style="left:652px;top:150px" width="12" height="15" viewBox="0 0 12 15"><rect x="0.5" y="0.5" width="4.5" height="11" fill="#fff" stroke="#111"/><rect x="1" y="1" width="3.5" height="2.6" fill="#6fa053"/><rect x="1" y="3.8" width="3.5" height="1.2" fill="#cfeffc"/><rect x="1" y="6" width="3.5" height="1" fill="#d8d8d8"/><path d="M2.8 8.4v4.1a3.7 1.1 0 0 0 7.4 0V8.4Z" fill="#dccb3c" stroke="#5b4d05" stroke-width="1"/><ellipse cx="6.5" cy="8.4" rx="3.7" ry="1.2" fill="#f7ee8a" stroke="#5b4d05" stroke-width="1"/></svg><div class="t" style="left:667.1px;top:146.8px;letter-spacing:-1.188px">CITY</div><div class="t" style="left:700.6px;top:146.8px;letter-spacing:-0.357px">[VARCHAR(50)]</div><div class="r" style="left:646px;top:168px;width:374px;height:20px;background:#eef4fc;box-shadow:inset 0 -1px 0 #dfe7f2"></div><svg class="i" style="left:652px;top:170px" width="12" height="15" viewBox="0 0 12 15"><rect x="0.5" y="0.5" width="4.5" height="11" fill="#fff" stroke="#111"/><rect x="1" y="1" width="3.5" height="2.6" fill="#6fa053"/><rect x="1" y="3.8" width="3.5" height="1.2" fill="#cfeffc"/><rect x="1" y="6" width="3.5" height="1" fill="#d8d8d8"/><path d="M2.8 8.4v4.1a3.7 1.1 0 0 0 7.4 0V8.4Z" fill="#dccb3c" stroke="#5b4d05" stroke-width="1"/><ellipse cx="6.5" cy="8.4" rx="3.7" ry="1.2" fill="#f7ee8a" stroke="#5b4d05" stroke-width="1"/></svg><div class="t" style="left:667.1px;top:166.8px;letter-spacing:-0.668px">CONTACTFIRSTNAME</div><div class="t" style="left:814.7px;top:166.8px;letter-spacing:-0.334px">[VARCHAR(50)]</div><div class="r" style="left:646px;top:188px;width:374px;height:20px;background:#eef4fc;box-shadow:inset 0 -1px 0 #dfe7f2"></div><svg class="i" style="left:652px;top:190px" width="12" height="15" viewBox="0 0 12 15"><rect x="0.5" y="0.5" width="4.5" height="11" fill="#fff" stroke="#111"/><rect x="1" y="1" width="3.5" height="2.6" fill="#6fa053"/><rect x="1" y="3.8" width="3.5" height="1.2" fill="#cfeffc"/><rect x="1" y="6" width="3.5" height="1" fill="#d8d8d8"/><path d="M2.8 8.4v4.1a3.7 1.1 0 0 0 7.4 0V8.4Z" fill="#dccb3c" stroke="#5b4d05" stroke-width="1"/><ellipse cx="6.5" cy="8.4" rx="3.7" ry="1.2" fill="#f7ee8a" stroke="#5b4d05" stroke-width="1"/></svg><div class="t" style="left:667.1px;top:186.8px;letter-spacing:-0.555px">CONTACTLASTNAME</div><div class="t" style="left:811.7px;top:186.8px;letter-spacing:-0.311px">[VARCHAR(50)]</div><div class="r" style="left:646px;top:208px;width:374px;height:20px;background:#eef4fc;box-shadow:inset 0 -1px 0 #dfe7f2"></div><svg class="i" style="left:652px;top:210px" width="12" height="15" viewBox="0 0 12 15"><rect x="0.5" y="0.5" width="4.5" height="11" fill="#fff" stroke="#111"/><rect x="1" y="1" width="3.5" height="2.6" fill="#6fa053"/><rect x="1" y="3.8" width="3.5" height="1.2" fill="#cfeffc"/><rect x="1" y="6" width="3.5" height="1" fill="#d8d8d8"/><path d="M2.8 8.4v4.1a3.7 1.1 0 0 0 7.4 0V8.4Z" fill="#dccb3c" stroke="#5b4d05" stroke-width="1"/><ellipse cx="6.5" cy="8.4" rx="3.7" ry="1.2" fill="#f7ee8a" stroke="#5b4d05" stroke-width="1"/></svg><div class="t" style="left:667.1px;top:206.8px;letter-spacing:-0.944px">COUNTRY</div><div class="t" style="left:737.4px;top:206.8px;letter-spacing:-0.311px">[VARCHAR(50)]</div><div class="r" style="left:646px;top:228px;width:374px;height:20px;background:#eef4fc;box-shadow:inset 0 -1px 0 #dfe7f2"></div><svg class="i" style="left:652px;top:230px" width="12" height="15" viewBox="0 0 12 15"><rect x="0.5" y="0.5" width="4.5" height="11" fill="#fff" stroke="#111"/><rect x="1" y="1" width="3.5" height="2.6" fill="#6fa053"/><rect x="1" y="3.8" width="3.5" height="1.2" fill="#cfeffc"/><rect x="1" y="6" width="3.5" height="1" fill="#d8d8d8"/><path d="M2.8 8.4v4.1a3.7 1.1 0 0 0 7.4 0V8.4Z" fill="#dccb3c" stroke="#5b4d05" stroke-width="1"/><ellipse cx="6.5" cy="8.4" rx="3.7" ry="1.2" fill="#f7ee8a" stroke="#5b4d05" stroke-width="1"/></svg><div class="t" style="left:667.1px;top:226.8px;letter-spacing:-0.630px">CREDITLIMIT</div><div class="t" style="left:756.3px;top:226.8px;letter-spacing:-0.297px">[DOUBLE</div><div class="t" style="left:822.2px;top:226.8px;letter-spacing:0.311px">Nullable]</div><div class="r" style="left:646px;top:248px;width:374px;height:20px;background:#eef4fc;box-shadow:inset 0 -1px 0 #dfe7f2"></div><svg class="i" style="left:652px;top:250px" width="12" height="15" viewBox="0 0 12 15"><rect x="0.5" y="0.5" width="4.5" height="11" fill="#fff" stroke="#111"/><rect x="1" y="1" width="3.5" height="2.6" fill="#6fa053"/><rect x="1" y="3.8" width="3.5" height="1.2" fill="#cfeffc"/><rect x="1" y="6" width="3.5" height="1" fill="#d8d8d8"/><path d="M2.8 8.4v4.1a3.7 1.1 0 0 0 7.4 0V8.4Z" fill="#dccb3c" stroke="#5b4d05" stroke-width="1"/><ellipse cx="6.5" cy="8.4" rx="3.7" ry="1.2" fill="#f7ee8a" stroke="#5b4d05" stroke-width="1"/></svg><div class="t" style="left:667.1px;top:246.8px;letter-spacing:-0.768px">CUSTOMERNAME</div><div class="t" style="left:788.3px;top:246.8px;letter-spacing:-0.311px">[VARCHAR(50)]</div><div class="r" style="left:646px;top:268px;width:374px;height:20px;background:#eef4fc;box-shadow:inset 0 -1px 0 #dfe7f2"></div><svg class="i" style="left:652px;top:270px" width="12" height="15" viewBox="0 0 12 15"><rect x="0.5" y="0.5" width="4.5" height="11" fill="#fff" stroke="#111"/><rect x="1" y="1" width="3.5" height="2.6" fill="#6fa053"/><rect x="1" y="3.8" width="3.5" height="1.2" fill="#cfeffc"/><rect x="1" y="6" width="3.5" height="1" fill="#d8d8d8"/><path d="M2.8 8.4v4.1a3.7 1.1 0 0 0 7.4 0V8.4Z" fill="#dccb3c" stroke="#5b4d05" stroke-width="1"/><ellipse cx="6.5" cy="8.4" rx="3.7" ry="1.2" fill="#f7ee8a" stroke="#5b4d05" stroke-width="1"/></svg><div class="t" style="left:667.1px;top:266.8px;letter-spacing:-0.801px">PHONE</div><div class="t" style="left:719.5px;top:266.8px;letter-spacing:-0.311px">[VARCHAR(50)]</div><div class="r" style="left:646px;top:288px;width:374px;height:20px;background:#eef4fc;box-shadow:inset 0 -1px 0 #dfe7f2"></div><svg class="i" style="left:652px;top:290px" width="12" height="15" viewBox="0 0 12 15"><rect x="0.5" y="0.5" width="4.5" height="11" fill="#fff" stroke="#111"/><rect x="1" y="1" width="3.5" height="2.6" fill="#6fa053"/><rect x="1" y="3.8" width="3.5" height="1.2" fill="#cfeffc"/><rect x="1" y="6" width="3.5" height="1" fill="#d8d8d8"/><path d="M2.8 8.4v4.1a3.7 1.1 0 0 0 7.4 0V8.4Z" fill="#dccb3c" stroke="#5b4d05" stroke-width="1"/><ellipse cx="6.5" cy="8.4" rx="3.7" ry="1.2" fill="#f7ee8a" stroke="#5b4d05" stroke-width="1"/></svg><div class="t" style="left:667.1px;top:286.8px;letter-spacing:-0.947px">POSTALCODE</div><div class="t" style="left:761.4px;top:286.8px;letter-spacing:-0.425px">[VARCHAR(15)</div><div class="t" style="left:860.8px;top:286.8px;letter-spacing:0.345px">Nullable]</div><div class="r" style="left:646px;top:308px;width:374px;height:20px;background:#eef4fc;box-shadow:inset 0 -1px 0 #dfe7f2"></div><svg class="i" style="left:652px;top:310px" width="12" height="15" viewBox="0 0 12 15"><rect x="0.5" y="0.5" width="4.5" height="11" fill="#fff" stroke="#111"/><rect x="1" y="1" width="3.5" height="2.6" fill="#6fa053"/><rect x="1" y="3.8" width="3.5" height="1.2" fill="#cfeffc"/><rect x="1" y="6" width="3.5" height="1" fill="#d8d8d8"/><path d="M2.8 8.4v4.1a3.7 1.1 0 0 0 7.4 0V8.4Z" fill="#dccb3c" stroke="#5b4d05" stroke-width="1"/><ellipse cx="6.5" cy="8.4" rx="3.7" ry="1.2" fill="#f7ee8a" stroke="#5b4d05" stroke-width="1"/></svg><div class="t" style="left:667.1px;top:306.8px;letter-spacing:-1.195px">STATE</div><div class="t" style="left:710.5px;top:306.8px;letter-spacing:-0.500px">[VARCHAR(50)</div><div class="t" style="left:809.9px;top:306.8px;letter-spacing:0.345px">Nullable]</div><div class="r" style="left:646px;top:328px;width:374px;height:20px;background:#eef4fc;box-shadow:inset 0 -1px 0 #dfe7f2"></div><svg class="i" style="left:649px;top:329.5px" width="15" height="16" viewBox="0 0 15 16"><path d="M2.6 6.2v6.6l.9 1.2 .9-1.2V6.2Z" fill="#cfdbe8" stroke="#16181c" stroke-width="0.9"/><circle cx="3.5" cy="3.7" r="2.9" fill="#cfdbe8" stroke="#16181c" stroke-width="1"/><circle cx="3.5" cy="2.9" r="0.9" fill="#16181c"/><path d="M1.2 8h1.4M1.2 9.8h1.4M1.2 11.6h1.4" stroke="#16181c" stroke-width="0.9"/><rect x="8.5" y="0.5" width="4.5" height="14" fill="#fff" stroke="#111"/><rect x="9" y="1" width="3.5" height="2.4" fill="#6fa053"/><rect x="9" y="3.6" width="3.5" height="1.4" fill="#cfeffc"/><rect x="9" y="7" width="3.5" height="1" fill="#d8d8d8"/><rect x="9" y="10" width="3.5" height="1" fill="#d8d8d8"/><rect x="9" y="12.4" width="3.5" height="1.2" fill="#cfeffc"/></svg><div class="t" style="left:667.1px;top:326.8px;letter-spacing:-0.950px">SALESREPEMPLOYEENUMBER</div><div class="t" style="left:871.6px;top:326.8px;letter-spacing:-0.990px">[INTEGER</div><div class="t" style="left:937.4px;top:326.8px;letter-spacing:0.146px">Nullable</div><div class="t" style="left:996.4px;top:326.8px;letter-spacing:-0.768px">FK]</div><div class="abs" style="left:645px;top:347px;width:376px;height:1px;background:#a0a0a0"></div><div class="bx" style="left:581px;top:779px;width:276px;height:119px;background:#eef4fc"></div><div class="r" style="left:582px;top:780px;width:276px;height:20px;background:#dee6f1"></div><svg class="i" style="left:584px;top:782px" width="17" height="15" viewBox="0 0 17 15"><rect x="0.5" y="0.5" width="12" height="11" fill="#fff" stroke="#111"/><rect x="1" y="1" width="11" height="2.2" fill="#6fa053"/><path d="M4.5 1v10M8.5 1v10M1 4.5h11M1 7.5h11" stroke="#9a9a9a" stroke-width="1" fill="none"/><rect x="1" y="3.3" width="11" height="1" fill="#cfeffc" opacity="0.8"/><path d="M8.4 8.5v4.1a3.8 1.1 0 0 0 7.6 0V8.5Z" fill="#dccb3c" stroke="#5b4d05" stroke-width="1"/><ellipse cx="12.2" cy="8.5" rx="3.8" ry="1.2" fill="#f7ee8a" stroke="#5b4d05" stroke-width="1"/></svg><div class="t b" style="left:603.0px;top:779.7px;letter-spacing:-0.486px">PUBLIC.ORDERS</div><svg class="i" style="left:840px;top:783.0px" width="10" height="10" viewBox="-5 -5 10 10"><path d="M-3.4 -0.2L0 -3.4L3.4 -0.2M-3.4 3.8L0 0.6L3.4 3.8" fill="none" stroke="#000" stroke-width="1.5"/></svg><div class="r" style="left:582px;top:800px;width:276px;height:20px;background:#eef4fc;box-shadow:inset 0 -1px 0 #dfe7f2"></div><svg class="i" style="left:584px;top:801px" width="16" height="16" viewBox="0 0 16 16"><path d="M8 0.5L10.2 2.2H13.2L13.6 5L15.6 8L13.6 11L13.2 13.6H10.2L8 15.5L5.8 13.6H2.8L2.4 11L0.4 8L2.4 5L2.8 2.2H5.8Z" fill="#a9cdf0" stroke="#4a90d9" stroke-width="0.9"/><circle cx="8" cy="4.6" r="2.7" fill="#f4dc4e" stroke="#2a2000" stroke-width="1"/><circle cx="8" cy="3.8" r="0.9" fill="#2a2000"/><path d="M7 7v6.4l1 1.2 1-1.2V7Z" fill="#f4dc4e" stroke="#2a2000" stroke-width="0.9"/><path d="M5.8 8.5h1.4M5.8 10.3h1.4M5.8 12.1h1.4" stroke="#2a2000" stroke-width="0.9"/></svg><div class="t" style="left:603.0px;top:798.8px;letter-spacing:-0.732px">ORDERNUMBER</div><div class="t" style="left:715.8px;top:798.8px;letter-spacing:-0.692px">[INTEGER PK]</div><div class="r" style="left:582px;top:820px;width:276px;height:20px;background:#eef4fc;box-shadow:inset 0 -1px 0 #dfe7f2"></div><svg class="i" style="left:588px;top:822px" width="12" height="15" viewBox="0 0 12 15"><rect x="0.5" y="0.5" width="4.5" height="11" fill="#fff" stroke="#111"/><rect x="1" y="1" width="3.5" height="2.6" fill="#6fa053"/><rect x="1" y="3.8" width="3.5" height="1.2" fill="#cfeffc"/><rect x="1" y="6" width="3.5" height="1" fill="#d8d8d8"/><path d="M2.8 8.4v4.1a3.7 1.1 0 0 0 7.4 0V8.4Z" fill="#dccb3c" stroke="#5b4d05" stroke-width="1"/><ellipse cx="6.5" cy="8.4" rx="3.7" ry="1.2" fill="#f7ee8a" stroke="#5b4d05" stroke-width="1"/></svg><div class="t" style="left:603.0px;top:818.8px;letter-spacing:-0.705px">COMMENTS</div><div class="t" style="left:687.6px;top:818.8px;letter-spacing:-0.416px">[VARCHAR(255)</div><div class="t" style="left:795.0px;top:818.8px;letter-spacing:0.267px">Nullable]</div><div class="r" style="left:582px;top:840px;width:276px;height:20px;background:#eef4fc;box-shadow:inset 0 -1px 0 #dfe7f2"></div><svg class="i" style="left:588px;top:842px" width="12" height="15" viewBox="0 0 12 15"><rect x="0.5" y="0.5" width="4.5" height="11" fill="#fff" stroke="#111"/><rect x="1" y="1" width="3.5" height="2.6" fill="#6fa053"/><rect x="1" y="3.8" width="3.5" height="1.2" fill="#cfeffc"/><rect x="1" y="6" width="3.5" height="1" fill="#d8d8d8"/><path d="M2.8 8.4v4.1a3.7 1.1 0 0 0 7.4 0V8.4Z" fill="#dccb3c" stroke="#5b4d05" stroke-width="1"/><ellipse cx="6.5" cy="8.4" rx="3.7" ry="1.2" fill="#f7ee8a" stroke="#5b4d05" stroke-width="1"/></svg><div class="t" style="left:603.0px;top:838.8px;letter-spacing:-0.905px">ORDERDATE</div><div class="t" style="left:690.3px;top:838.8px;letter-spacing:-0.459px">[DATE]</div><div class="r" style="left:582px;top:860px;width:276px;height:20px;background:#eef4fc;box-shadow:inset 0 -1px 0 #dfe7f2"></div><svg class="i" style="left:588px;top:862px" width="12" height="15" viewBox="0 0 12 15"><rect x="0.5" y="0.5" width="4.5" height="11" fill="#fff" stroke="#111"/><rect x="1" y="1" width="3.5" height="2.6" fill="#6fa053"/><rect x="1" y="3.8" width="3.5" height="1.2" fill="#cfeffc"/><rect x="1" y="6" width="3.5" height="1" fill="#d8d8d8"/><path d="M2.8 8.4v4.1a3.7 1.1 0 0 0 7.4 0V8.4Z" fill="#dccb3c" stroke="#5b4d05" stroke-width="1"/><ellipse cx="6.5" cy="8.4" rx="3.7" ry="1.2" fill="#f7ee8a" stroke="#5b4d05" stroke-width="1"/></svg><div class="t" style="left:603.0px;top:858.8px;letter-spacing:-0.823px">REQUIREDDATE</div><div class="t" style="left:713.1px;top:858.8px;letter-spacing:-0.642px">[DATE]</div><div class="r" style="left:582px;top:880px;width:276px;height:20px;background:#eef4fc;box-shadow:inset 0 -1px 0 #dfe7f2"></div><svg class="i" style="left:588px;top:882px" width="12" height="15" viewBox="0 0 12 15"><rect x="0.5" y="0.5" width="4.5" height="11" fill="#fff" stroke="#111"/><rect x="1" y="1" width="3.5" height="2.6" fill="#6fa053"/><rect x="1" y="3.8" width="3.5" height="1.2" fill="#cfeffc"/><rect x="1" y="6" width="3.5" height="1" fill="#d8d8d8"/><path d="M2.8 8.4v4.1a3.7 1.1 0 0 0 7.4 0V8.4Z" fill="#dccb3c" stroke="#5b4d05" stroke-width="1"/><ellipse cx="6.5" cy="8.4" rx="3.7" ry="1.2" fill="#f7ee8a" stroke="#5b4d05" stroke-width="1"/></svg><div class="t" style="left:603.0px;top:878.8px;letter-spacing:-0.847px">SHIPPEDDATE</div><div class="t" style="left:700.6px;top:878.8px;letter-spacing:-0.981px">[DATE</div><div class="t" style="left:741.6px;top:878.8px;letter-spacing:0.245px">Nullable]</div><div class="abs" style="left:581px;top:899px;width:278px;height:1px;background:#a0a0a0"></div><svg class="ln" width="1219" height="890" viewBox="0 0 1219 890" fill="none" stroke-width="1"><path d="M573 261.5L596.00 261.50Q599.5 261.5 599.50 265.00L599.50 513.00Q599.5 516.5 603.00 516.50L645 516.5" stroke="#d8a067"/><path d="M647 516.5L639.7 512.9V520.1Z" fill="#d8a067" stroke="none"/><path d="M62 321.5L57.00 321.50Q53.5 321.5 53.50 325.00L53.50 542.00Q53.5 545.5 57.00 545.50L488.00 545.50Q491.5 545.5 491.50 549.00L491.50 770.00Q491.5 773.5 488.00 773.50L483 773.5" stroke="#d8a067"/><path d="M484 773.5L490 770.0V777.0Z" fill="#d8a067" stroke="none"/><path d="M62 382.5L58.75 382.50Q55.5 382.5 55.50 385.75L55.50 709.00Q55.5 712.5 59.00 712.50L530.00 712.50Q533.5 712.5 533.50 716.00L533.5 870" stroke="#d8a067"/><path d="M573 61.5L592.00 61.50Q595.5 61.5 595.50 65.00L595.50 74.00Q595.5 77.5 599.00 77.50L645 77.5" stroke="#a2a2a2"/><path d="M647 77.5L639.7 73.9V81.1Z" fill="#a2a2a2" stroke="none"/><path d="M573 81.5L606.00 81.50Q609.5 81.5 609.50 85.00L609.50 94.00Q609.5 97.5 613.00 97.50L645 97.5" stroke="#a2a2a2"/><path d="M647 97.5L639.7 93.9V101.1Z" fill="#a2a2a2" stroke="none"/><path d="M573 101.5L608.50 101.50Q612 101.5 612.00 105.00L612.00 114.00Q612 117.5 615.50 117.50L645 117.5" stroke="#a2a2a2"/><path d="M647 117.5L639.7 113.9V121.1Z" fill="#a2a2a2" stroke="none"/><path d="M573 121.5L604.00 121.50Q607.5 121.5 607.50 125.00L607.50 134.00Q607.5 137.5 611.00 137.50L645 137.5" stroke="#a2a2a2"/><path d="M647 137.5L639.7 133.9V141.1Z" fill="#a2a2a2" stroke="none"/><path d="M573 141.5L610.50 141.50Q614 141.5 614.00 145.00L614.00 154.00Q614 157.5 617.50 157.50L645 157.5" stroke="#a2a2a2"/><path d="M647 157.5L639.7 153.9V161.1Z" fill="#a2a2a2" stroke="none"/><path d="M573 161.5L602.00 161.50Q605.5 161.5 605.50 165.00L605.50 174.00Q605.5 177.5 609.00 177.50L645 177.5" stroke="#a2a2a2"/><path d="M647 177.5L639.7 173.9V181.1Z" fill="#a2a2a2" stroke="none"/><path d="M573 181.5L612.00 181.50Q615.5 181.5 615.50 185.00L615.50 194.00Q615.5 197.5 619.00 197.50L645 197.5" stroke="#a2a2a2"/><path d="M647 197.5L639.7 193.9V201.1Z" fill="#a2a2a2" stroke="none"/><path d="M573 201.5L600.00 201.50Q603.5 201.5 603.50 205.00L603.50 214.00Q603.5 217.5 607.00 217.50L645 217.5" stroke="#a2a2a2"/><path d="M647 217.5L639.7 213.9V221.1Z" fill="#a2a2a2" stroke="none"/><path d="M573 221.5L614.00 221.50Q617.5 221.5 617.50 225.00L617.50 234.00Q617.5 237.5 621.00 237.50L645 237.5" stroke="#a2a2a2"/><path d="M647 237.5L639.7 233.9V241.1Z" fill="#a2a2a2" stroke="none"/><path d="M573 241.5L598.00 241.50Q601.5 241.5 601.50 245.00L601.50 254.00Q601.5 257.5 605.00 257.50L645 257.5" stroke="#a2a2a2"/><path d="M647 257.5L639.7 253.9V261.1Z" fill="#a2a2a2" stroke="none"/><path d="M599 261.5L616.00 261.50Q619.5 261.5 619.50 265.00L619.50 334.00Q619.5 337.5 623.00 337.50L645 337.5" stroke="#a2a2a2"/><path d="M647 337.5L639.7 333.9V341.1Z" fill="#a2a2a2" stroke="none"/><path d="M573 403.5L618.00 403.50Q621.5 403.5 621.50 400.00L621.50 281.00Q621.5 277.5 625.00 277.50L645 277.5" stroke="#a2a2a2"/><path d="M647 277.5L639.7 273.9V281.1Z" fill="#a2a2a2" stroke="none"/><path d="M573 423.5L594.00 423.50Q597.5 423.5 597.50 420.00L597.50 301.00Q597.5 297.5 601.00 297.50L645 297.5" stroke="#a2a2a2"/><path d="M647 297.5L639.7 293.9V301.1Z" fill="#a2a2a2" stroke="none"/><path d="M573 443.5L620.00 443.50Q623.5 443.5 623.50 440.00L623.50 321.00Q623.5 317.5 627.00 317.50L645 317.5" stroke="#a2a2a2"/><path d="M647 317.5L639.7 313.9V321.1Z" fill="#a2a2a2" stroke="none"/><path d="M573 300.5L574.25 301.75Q575.5 303 575.50 304.77L575.5 870" stroke="#a2a2a2"/><path d="M573 362.5L588.00 362.50Q591.5 362.5 591.50 366.00L591.5 870" stroke="#a2a2a2"/><path d="M635.5 870L635.5 870" stroke="#a2a2a2"/><path d="M875.5 870L875.50 632.00Q875.5 628.5 872.00 628.50L639.00 628.50Q635.5 628.5 635.50 625.00L635.50 100.25Q635.5 97.5 638.25 97.50L641 97.5" stroke="#a2a2a2"/><path d="M867.5 870L867.50 516.00Q867.5 512.5 864.00 512.50L641.50 512.50Q638 512.5 638.00 509.00L638.00 99.00Q638 97.5 639.50 97.50L641 97.5" stroke="#a2a2a2"/><path d="M1021 337.5L1122.00 337.50Q1125.5 337.5 1125.50 341.00L1125.50 518.00Q1125.5 521.5 1129.00 521.50L1199 521.5" stroke="#a2a2a2"/><path d="M1156 517.5L1180.00 517.50Q1183.5 517.5 1183.50 514.00L1183.50 505.00Q1183.5 501.5 1187.00 501.50L1199 501.5" stroke="#a2a2a2"/><path d="M1156 537.5L1188.00 537.50Q1191.5 537.5 1191.50 534.00L1191.5 521.5" stroke="#a2a2a2"/><path d="M1156 618.5L1190.00 618.50Q1193.5 618.5 1193.50 615.00L1193.50 544.25Q1193.5 541.5 1196.25 541.50L1199 541.5" stroke="#a2a2a2"/><path d="M1156 638.5L1186.00 638.50Q1189.5 638.5 1189.50 635.00L1189.50 565.00Q1189.5 561.5 1193.00 561.50L1199 561.5" stroke="#a2a2a2"/><path d="M1156 658.5L1192.00 658.50Q1195.5 658.5 1195.50 655.00L1195.50 583.25Q1195.5 581.5 1197.25 581.50L1199 581.5" stroke="#a2a2a2"/><path d="M1156 678.5L1184.00 678.50Q1187.5 678.5 1187.50 675.00L1187.50 605.00Q1187.5 601.5 1191.00 601.50L1199 601.5" stroke="#a2a2a2"/><path d="M1156 698.5L1194.00 698.50Q1197.5 698.5 1197.50 695.00L1197.50 624.25Q1197.5 623.5 1198.25 623.50L1199 623.5" stroke="#a2a2a2"/><path d="M1156 718.5L1182.00 718.50Q1185.5 718.5 1185.50 715.00L1185.50 645.00Q1185.5 641.5 1189.00 641.50L1199 641.5" stroke="#a2a2a2"/><path d="M1156 738.5L1199 738.5" stroke="#a2a2a2"/><path d="M483 773.5L520.00 773.50Q523.5 773.5 523.50 777.00L523.50 786.00Q523.5 789.5 527.00 789.50L581 789.5" stroke="#a2a2a2"/><path d="M583 789.5L575.7 785.9V793.1Z" fill="#a2a2a2" stroke="none"/><path d="M483 793.5L528.00 793.50Q531.5 793.5 531.50 797.00L531.50 806.00Q531.5 809.5 535.00 809.50L581 809.5" stroke="#a2a2a2"/><path d="M583 809.5L575.7 805.9V813.1Z" fill="#a2a2a2" stroke="none"/><path d="M483 813.5L526.00 813.50Q529.5 813.5 529.50 817.00L529.50 826.00Q529.5 829.5 533.00 829.50L581 829.5" stroke="#a2a2a2"/><path d="M583 829.5L575.7 825.9V833.1Z" fill="#a2a2a2" stroke="none"/><path d="M483 833.5L532.00 833.50Q535.5 833.5 535.50 837.00L535.5 870" stroke="#a2a2a2"/><path d="M483 853.5H525.5L529.5 849.5H581" stroke="#a2a2a2"/><path d="M583 849.5L575.7 845.9V853.1Z" fill="#a2a2a2" stroke="none"/></svg></div>
<!-- vertical scrollbar -->
<div class="abs" style="left:1201px;top:48px;width:15px;height:805px;background:#d5d3d0;border-left:1px solid #a9a39d;border-right:1px solid #a9a39d;box-sizing:border-box"></div>
<div class="abs" style="left:1201px;top:34px;width:15px;height:15px;box-sizing:border-box;border:1px solid #7d7a76;border-radius:4px 4px 0 0;background:linear-gradient(90deg,#ffffff,#f4f4f3 50%,#e4e3e1)"></div>
<svg class="abs" style="left:1201px;top:34px" width="15" height="15"><path d="M4 9.500L7.500 6L11 9.500" fill="none" stroke="#aaa7a3" stroke-width="1.300"/></svg>
<div class="abs" style="left:1201px;top:48px;width:15px;height:587px;box-sizing:border-box;border:1px solid #5878a8;background:linear-gradient(90deg,#b9d1f0,#a3c1e8 35%,#86aad9)"></div>
<svg class="abs" style="left:1201px;top:334px" width="15" height="14"><path d="M5 3.500h5M5 6.500h5M5 9.500h5" stroke="#46628e" stroke-width="1"/></svg>
<div class="abs" style="left:1201px;top:852px;width:15px;height:15px;box-sizing:border-box;border:1px solid #8f8b86;border-radius:0 0 4px 4px;background:linear-gradient(90deg,#ffffff,#f4f4f3 50%,#e4e3e1)"></div>
<svg class="abs" style="left:1201px;top:852px" width="15" height="15"><path d="M4 5.500L7.500 9L11 5.500" fill="none" stroke="#111" stroke-width="1.500"/></svg>
<!-- horizontal scrollbar -->
<div class="abs" style="left:19px;top:870px;width:1165px;height:15px;background:#d5d3d0;border-top:1px solid #a9a39d;border-bottom:1px solid #a9a39d;box-sizing:border-box"></div>
<div class="abs" style="left:5px;top:870px;width:15px;height:15px;box-sizing:border-box;border:1px solid #7d7a76;border-radius:4px 0 0 4px;background:linear-gradient(180deg,#ffffff,#f4f4f3 50%,#e4e3e1)"></div>
<svg class="abs" style="left:5px;top:870px" width="15" height="15"><path d="M9.500 4L6 7.500L9.500 11" fill="none" stroke="#aaa7a3" stroke-width="1.300"/></svg>
<div class="abs" style="left:19px;top:870px;width:940px;height:15px;box-sizing:border-box;border:1px solid #5878a8;background:linear-gradient(180deg,#b9d1f0,#a3c1e8 35%,#86aad9)"></div>
<svg class="abs" style="left:482px;top:870px" width="14" height="15"><path d="M3.500 5v5M6.500 5v5M9.500 5v5" stroke="#46628e" stroke-width="1"/></svg>
<div class="abs" style="left:1183px;top:870px;width:15px;height:15px;box-sizing:border-box;border:1px solid #8f8b86;border-radius:0 4px 4px 0;background:linear-gradient(180deg,#ffffff,#f4f4f3 50%,#e4e3e1)"></div>
<svg class="abs" style="left:1183px;top:870px" width="15" height="15"><path d="M5.500 4L9 7.500L5.500 11" fill="none" stroke="#111" stroke-width="1.500"/></svg>
</body></html>
